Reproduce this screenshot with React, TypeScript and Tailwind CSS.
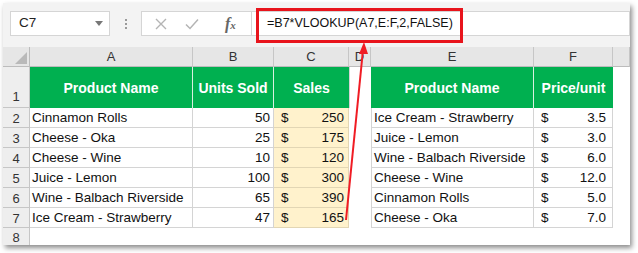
import React from 'react';

const left = [
  { name: 'Cinnamon Rolls', units: 50, sales: 250 },
  { name: 'Cheese - Oka', units: 25, sales: 175 },
  { name: 'Cheese - Wine', units: 10, sales: 120 },
  { name: 'Juice - Lemon', units: 100, sales: 300 },
  { name: 'Wine - Balbach Riverside', units: 65, sales: 390 },
  { name: 'Ice Cream - Strawberry', units: 47, sales: 165 },
];

const right = [
  { name: 'Ice Cream - Strawberry', price: '3.5' },
  { name: 'Juice - Lemon', price: '3.0' },
  { name: 'Wine - Balbach Riverside', price: '6.0' },
  { name: 'Cheese - Wine', price: '12.0' },
  { name: 'Cinnamon Rolls', price: '5.0' },
  { name: 'Cheese - Oka', price: '7.0' },
];

const font = { fontFamily: '"Liberation Sans", Arial, sans-serif' };

export default function App() {
  return (
    <div className="w-[638px] h-[253px] bg-white pt-[3px] pl-[3px]" style={font}>
      <div className="relative w-[627px] h-[242px] bg-white shadow-[2px_3px_5px_rgba(0,0,0,0.45)] overflow-hidden">
        {/* formula bar */}
        <div className="h-[44px] bg-[#f3f3f3] flex items-start pt-[8px] pl-[7px]">
          <div className="w-[100px] h-[25px] bg-white border border-[#d5d5d5] flex items-center justify-between pl-[8px] pr-[6px] text-[13.5px] text-[#222]">
            <span>C7</span>
            <span className="w-0 h-0 border-l-[4px] border-r-[4px] border-t-[5px] border-l-transparent border-r-transparent border-t-[#777]" />
          </div>
          <div className="w-[31px] h-[25px] flex flex-col items-center justify-center gap-[2px]">
            <span className="w-[2px] h-[2px] bg-[#9a9a9a]" />
            <span className="w-[2px] h-[2px] bg-[#9a9a9a]" />
            <span className="w-[2px] h-[2px] bg-[#9a9a9a]" />
          </div>
          <div className="w-[110px] h-[25px] bg-white border border-[#d5d5d5] border-r-0 flex items-center pl-[13px] gap-[18px]">
            <svg width="12" height="12" viewBox="0 0 12 12">
              <path d="M1 1 L11 11 M11 1 L1 11" stroke="#b4b4b4" strokeWidth="1.4" />
            </svg>
            <svg width="14" height="12" viewBox="0 0 14 12">
              <path d="M1 6.5 L5 10.5 L13 1.5" stroke="#b4b4b4" strokeWidth="1.5" fill="none" />
            </svg>
            <span className="ml-[8px] text-[16px] italic font-bold text-[#666]" style={{ fontFamily: '"Liberation Serif", serif' }}>
              f<span className="text-[11px]">x</span>
            </span>
          </div>
          <div className="flex-1 h-[25px] bg-white border border-[#d5d5d5] flex items-center pl-[15px] text-[12.5px] text-[#111] whitespace-nowrap">
            =B7*VLOOKUP(A7,E:F,2,FALSE)
          </div>
        </div>

        {/* sheet */}
        <div className="grid grid-cols-[27px_163px_81px_75px_22px_163px_79px_1fr] grid-rows-[20px_41px_20px_20px_20px_20px_20px_20px_17px] text-[13.5px] text-[#111] whitespace-nowrap">
          <div className="bg-[#e6e6e6] border-r border-b border-[#bcbcbc] flex items-end justify-end pr-[2px] pb-[2px]">
            <span className="w-0 h-0" style={{ borderBottom: '12px solid #b9b9b9', borderLeft: '12px solid transparent' }} />
          </div>
          {['A', 'B', 'C', 'D', 'E', 'F', ''].map((c, i) => (
            <div key={c + i} className="bg-[#e6e6e6] border-r border-b border-[#c6c6c6] border-b-[#bcbcbc] flex items-center justify-center pt-[1px] text-[13px] text-[#333]">
              {c}
            </div>
          ))}

          <div className="bg-[#eeeeee] border-r border-b border-[#c6c6c6] flex items-end justify-center pb-[1px] text-[13px] text-[#333]">1</div>
          <div className="bg-[#00b050] border-r border-[#d8f0e0] flex items-center justify-center pt-[1px] font-bold text-[14px] text-white">Product Name</div>
          <div className="bg-[#00b050] border-r border-[#d8f0e0] flex items-center justify-center pt-[1px] font-bold text-[14px] text-white">Units Sold</div>
          <div className="bg-[#00b050] flex items-center justify-center pt-[1px] font-bold text-[14px] text-white">Sales</div>
          <div className="bg-white border-l border-[#d4d4d4]" />
          <div className="bg-[#00b050] border-r border-[#d8f0e0] flex items-center justify-center pt-[1px] font-bold text-[14px] text-white">Product Name</div>
          <div className="bg-[#00b050] flex items-center justify-center pt-[1px] font-bold text-[14px] text-white">Price/unit</div>
          <div className="bg-white" />

          {left.map((r, i) => (
            <React.Fragment key={i}>
              <div className="bg-[#eeeeee] border-r border-b border-[#c6c6c6] flex items-center justify-center pt-[2px] text-[13px] text-[#333]">{i + 2}</div>
              <div className="border-r border-b border-[#d4d4d4] flex items-center pt-[2px] pl-[2px]">{r.name}</div>
              <div className="border-r border-b border-[#d4d4d4] flex items-center justify-end pt-[2px] pr-[3px]">{r.units}</div>
              <div className="bg-[#fff2cc] border-r border-b border-[#e2d6b4] flex items-center justify-between pt-[2px] pl-[7px] pr-[4px]">
                <span>$</span>
                <span>{r.sales}</span>
              </div>
              <div className="bg-white" />
              <div className="border-l border-r border-b border-[#d4d4d4] flex items-center pt-[2px] pl-[2px]">{right[i].name}</div>
              <div className="border-r border-b border-[#d4d4d4] flex items-center justify-between pt-[2px] pl-[7px] pr-[6px]">
                <span>$</span>
                <span>{right[i].price}</span>
              </div>
              <div className="bg-white" />
            </React.Fragment>
          ))}

          <div className="bg-[#eeeeee] border-r border-[#c6c6c6] flex items-start justify-center pt-[2px] text-[13px] text-[#333] leading-[16px]">8</div>
          <div className="col-span-7 bg-white" />
        </div>

        {/* red highlight and arrow */}
        <svg className="absolute left-0 top-0 pointer-events-none" width="627" height="242" viewBox="3 3 627 242">
          <rect x="257.5" y="9.5" width="204" height="32" fill="none" stroke="#e8141c" strokeWidth="3" />
          <path d="M346 220 L363 50" stroke="#f01c24" strokeWidth="2" fill="none" />
          <path d="M364 42 L359 54 L368 54 Z" fill="#f01c24" />
        </svg>
      </div>
    </div>
  );
}
